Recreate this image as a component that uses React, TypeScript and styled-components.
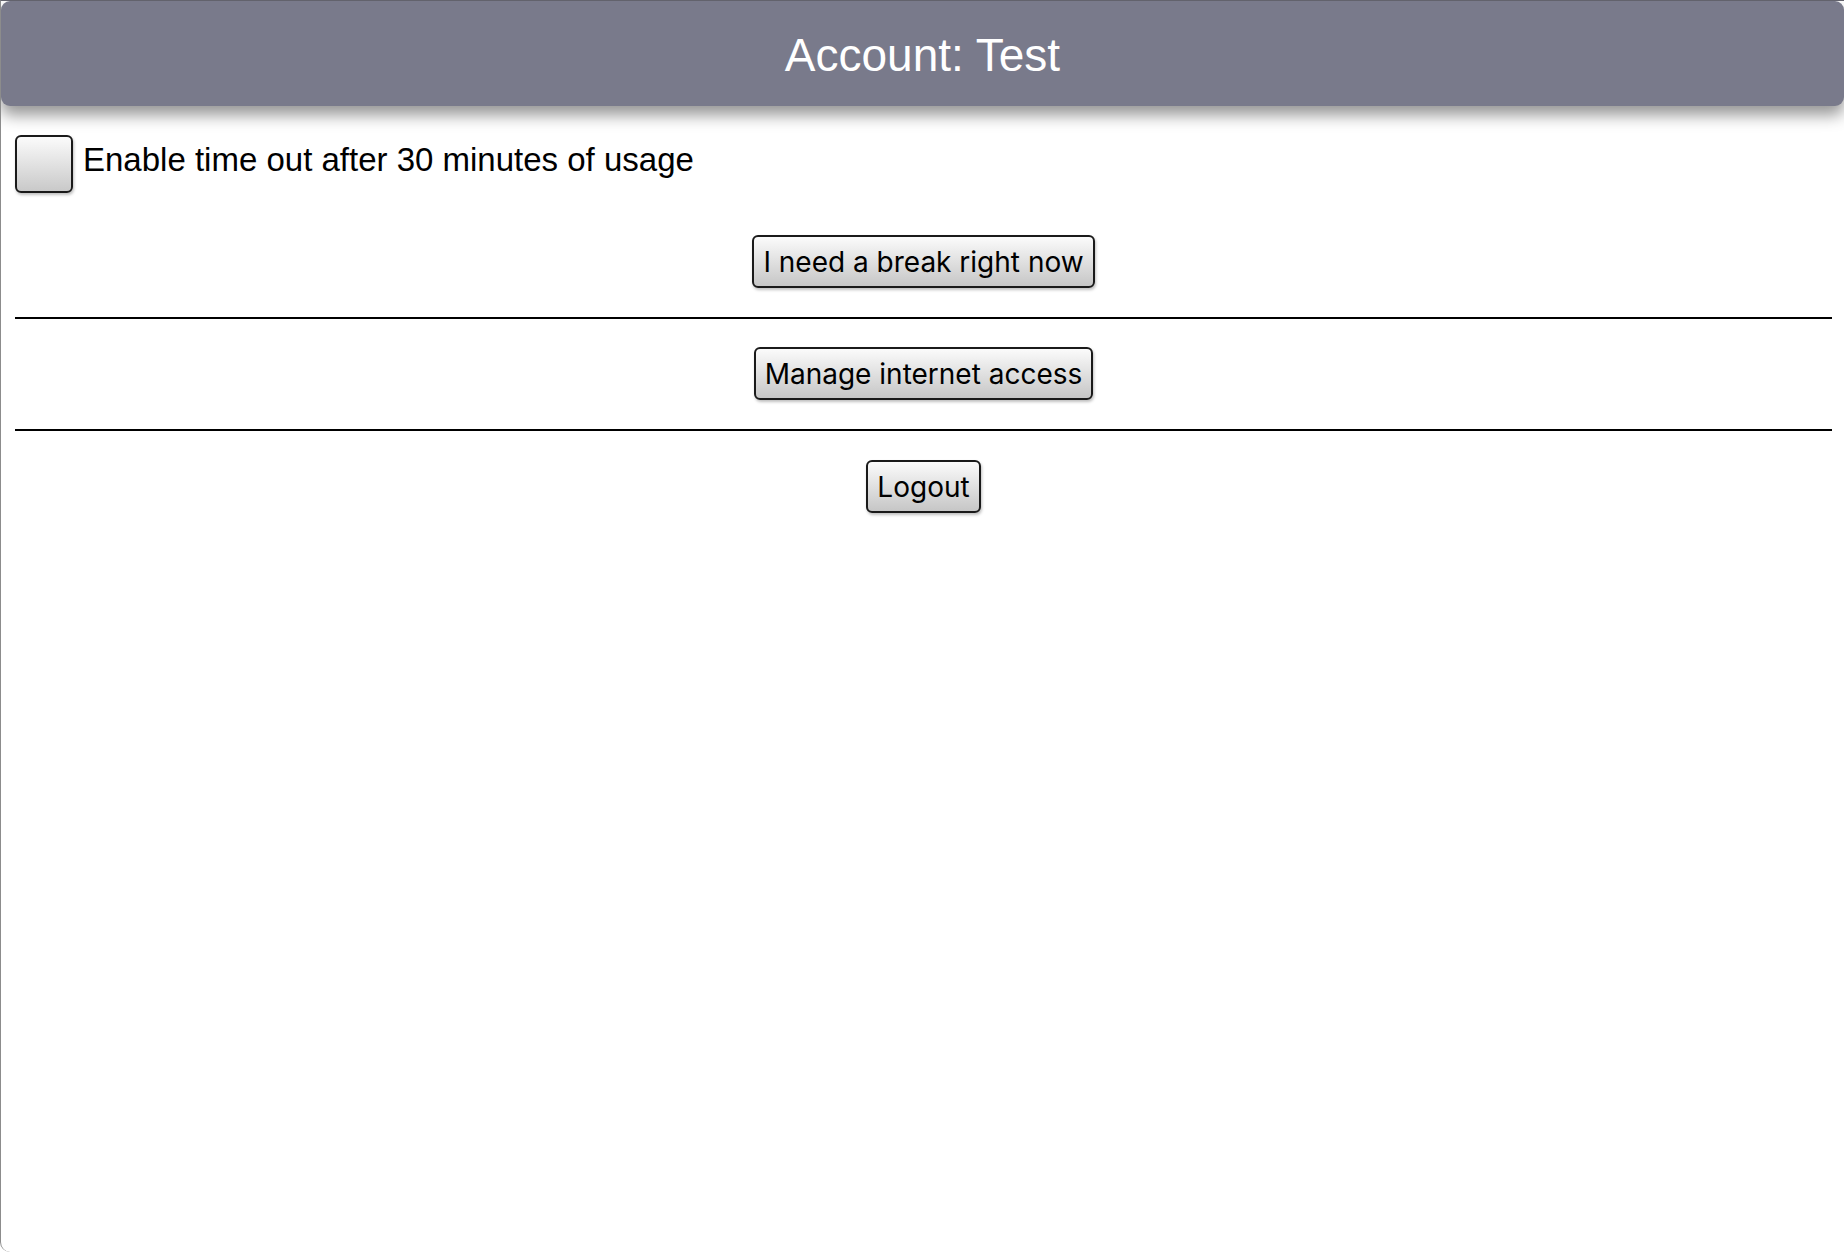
import React, { useState } from "react";
import styled, { createGlobalStyle } from "styled-components";

const GlobalStyle = createGlobalStyle`
  html, body {
    margin: 0;
    padding: 0;
    background: #ffffff;
  }
  body {
    font-family: "Liberation Sans", Arial, sans-serif;
    color: #000;
  }
`;

const Frame = styled.div`
  box-sizing: border-box;
  height: 1252px;
  border-left: 1px solid #8c8c8c;
  border-top: 1px solid #62626c;
  border-bottom-left-radius: 10px;
  background: #fff;
  overflow: hidden;
`;

const Header = styled.header`
  height: 105px;
  display: flex;
  align-items: center;
  justify-content: center;
  padding-top: 2px;
  box-sizing: border-box;
  background: #797a8b;
  border-radius: 9px;
  box-shadow: 0 9px 16px rgba(0, 0, 0, 0.42);
  color: #fff;
  font-size: 46px;
  position: relative;
  z-index: 1;
`;

const Content = styled.main`
  display: flex;
  flex-direction: column;
  padding: 29px 12px 0 14px;
`;

const CheckRow = styled.label`
  display: flex;
  align-items: center;
  gap: 10px;
  font-size: 33px;
  line-height: 1;
  cursor: pointer;
`;

const CheckBox = styled.span<{ checked: boolean }>`
  box-sizing: border-box;
  width: 58px;
  height: 58px;
  flex: none;
  border: 2px solid #1a1a1a;
  border-radius: 6px;
  background: ${({ checked }) =>
    checked
      ? "linear-gradient(#8fb4ff, #3f78e0)"
      : "linear-gradient(#fbfbfb, #c9c9c9)"};
  box-shadow: 1px 2px 3px rgba(0, 0, 0, 0.25);
`;

const CheckText = styled.span`
  margin-top: -9px;
`;

const Section = styled.div<{ top: number; bottom: number }>`
  display: flex;
  justify-content: center;
  padding: ${({ top, bottom }) => `${top}px 0 ${bottom}px`};
`;

const Divider = styled.hr`
  margin: 0;
  border: none;
  height: 2px;
  background: #000;
`;

const Button = styled.button`
  box-sizing: border-box;
  height: 53px;
  padding: 0 9px;
  font-family: Inter, "Liberation Sans", sans-serif;
  font-size: 28px;
  color: #000;
  border: 2px solid #1a1a1a;
  border-radius: 6px;
  background: linear-gradient(#fbfbfb, #c6c6c6);
  box-shadow: 1px 2px 3px rgba(0, 0, 0, 0.25);
  cursor: pointer;
`;

export default function App() {
  const [timeout, setTimeoutEnabled] = useState(false);

  return (
    <>
      <GlobalStyle />
      <Frame>
        <Header>Account: Test</Header>
        <Content>
          <CheckRow onClick={() => setTimeoutEnabled(!timeout)}>
            <CheckBox checked={timeout} />
            <CheckText>Enable time out after 30 minutes of usage</CheckText>
          </CheckRow>
          <Section top={42} bottom={29}>
            <Button>I need a break right now</Button>
          </Section>
          <Divider />
          <Section top={28} bottom={29}>
            <Button>Manage internet access</Button>
          </Section>
          <Divider />
          <Section top={29} bottom={0}>
            <Button>Logout</Button>
          </Section>
        </Content>
      </Frame>
    </>
  );
}
